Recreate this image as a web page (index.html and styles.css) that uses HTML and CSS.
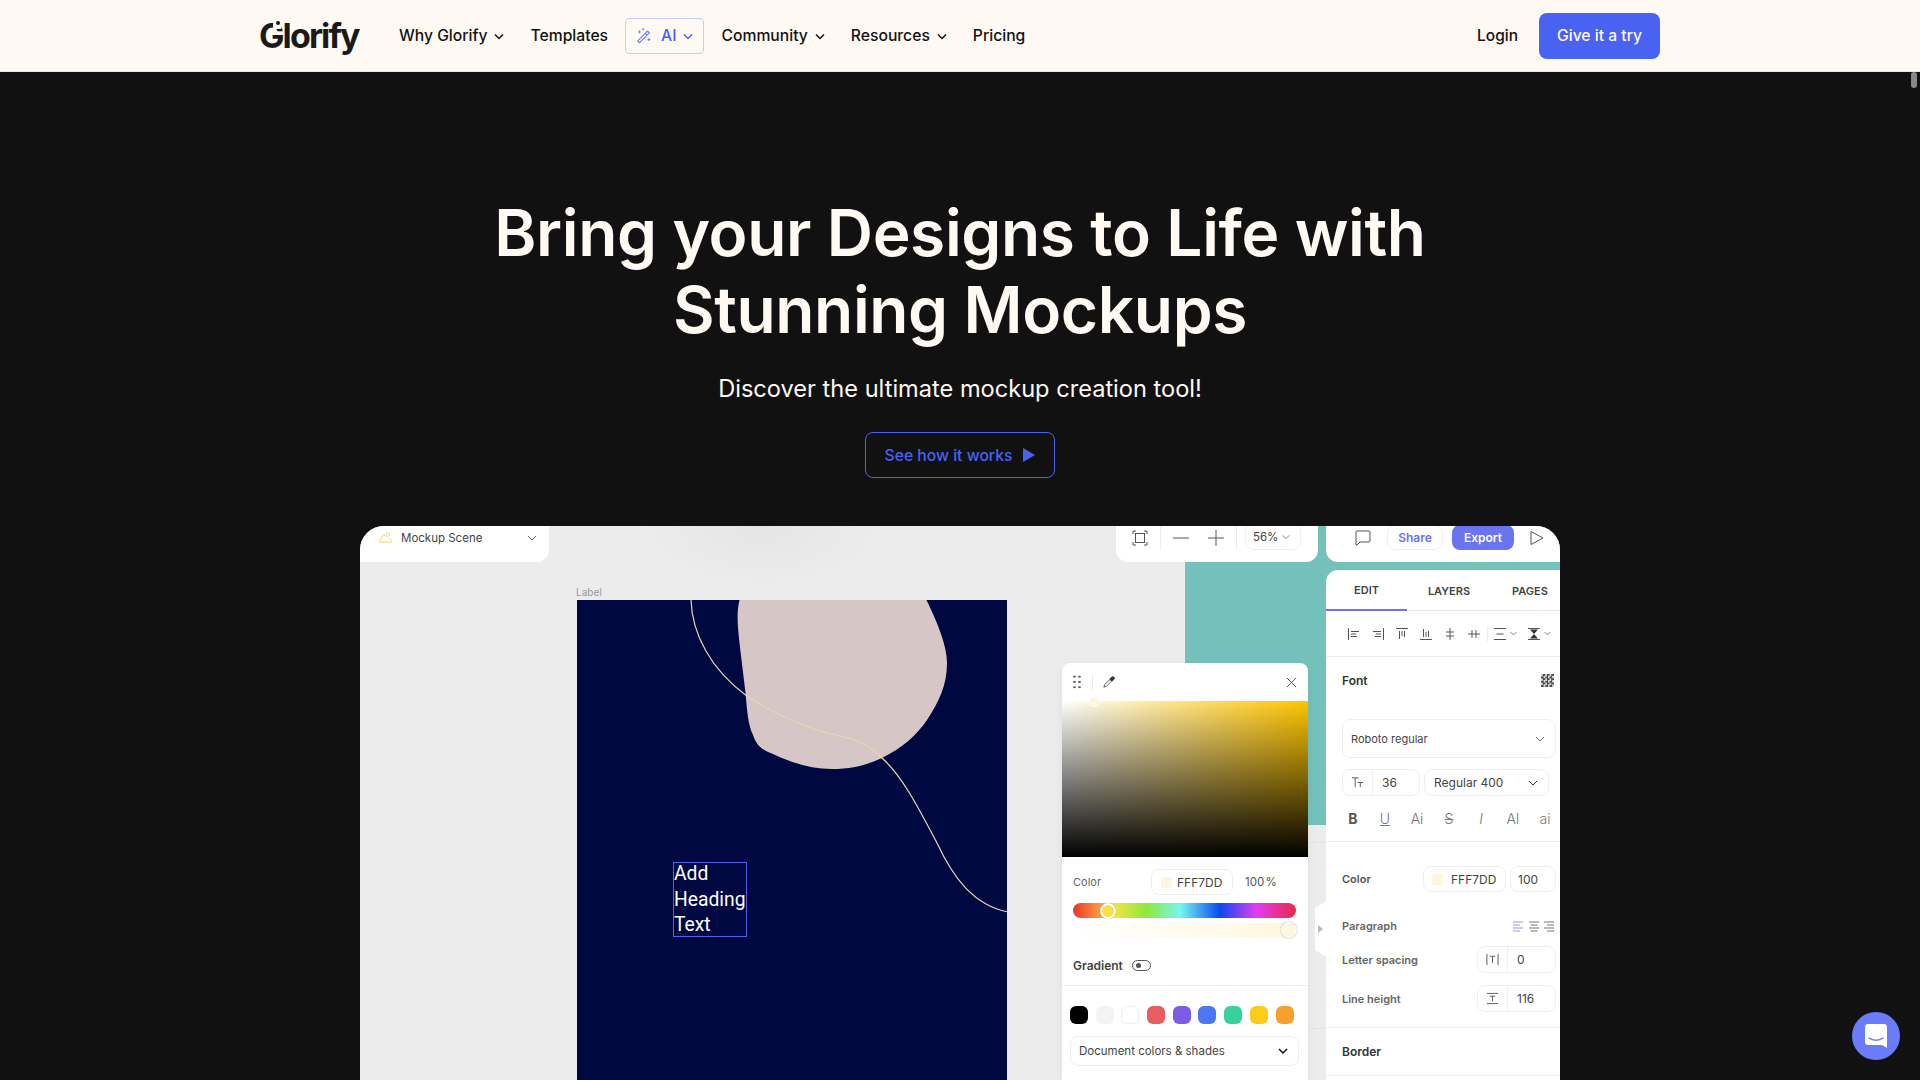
FILE: index.html
```html
<!DOCTYPE html>
<html lang="en">
<head>
    <meta charset="UTF-8">
    <meta name="viewport" content="width=device-width, initial-scale=1.0">
    <title>Glorify - Mockups</title>
    <link rel="stylesheet" href="styles.css">
</head>
<body>
    <!-- Top navigation -->
    <header class="topbar">
        <div class="topbar-inner">
            <a class="logo" href="#"><span class="logo-notch"></span><span class="logo-dot"></span>Glorify</a>
            <nav class="main-nav">
                <a class="nav-item" href="#">Why Glorify <svg class="chev" viewBox="0 0 12 12"><path d="M2 4.500 6 8.500l4-4"/></svg></a>
                <a class="nav-item" href="#">Templates</a>
                <a class="nav-item nav-ai" href="#">
                    <svg class="wand" viewBox="0 0 20 20"><path d="M3 15.500 14 4.500l2 2L5 17.500zM11.500 7l2 2M3.500 5.500h3M5 4v3M14 14h3M15.500 12.500v3M8 2.500h2M9 1.500v2"/></svg>
                    AI <svg class="chev" viewBox="0 0 12 12"><path d="M2 4.500 6 8.500l4-4"/></svg>
                </a>
                <a class="nav-item" href="#">Community <svg class="chev" viewBox="0 0 12 12"><path d="M2 4.500 6 8.500l4-4"/></svg></a>
                <a class="nav-item" href="#">Resources <svg class="chev" viewBox="0 0 12 12"><path d="M2 4.500 6 8.500l4-4"/></svg></a>
                <a class="nav-item" href="#">Pricing</a>
            </nav>
            <div class="nav-right">
                <a class="login" href="#">Login</a>
                <a class="try-btn" href="#">Give it a try</a>
            </div>
        </div>
    </header>

    <main class="hero">
        <h1>Bring your Designs to Life with<br>Stunning Mockups</h1>
        <p class="hero-sub">Discover the ultimate mockup creation tool!</p>
        <a class="how-btn" href="#">See how it works <svg viewBox="0 0 12 14"><path d="M0 0 12 7 0 14z"/></svg></a>

        <!-- Editor mockup -->
        <section class="mockup">
            <div class="teal"></div>
            <div class="canvas-glow"></div>
            <div class="canvas-rule rule-top"></div>
            <div class="canvas-rule rule-bottom"></div>

            <div class="artboard-label">Label</div>
            <div class="artboard">
                <svg class="art" viewBox="0 0 431 480">
                    <path fill="#d6c6c6" d="M162.500 0C160 10 160.500 20 161 28C163 50 166 70 168.500 93C170 110 171 125 176 135C180 147 186 150 196 154C215 163 235 169 255 169C275 169 290 165 305 158C325 148 340 135 350 120C362 102 370 85 370 63C370 45 360 22 349.500 0Z"/>
                    <path fill="none" stroke="#e8d9b0" stroke-width="1.200" d="M114 0C115 35 135 70 168.500 95C195 113 225 128 267 137C285 141 295 148 305 158C325 176 340 205 360 243C375 275 395 305 431 312"/>
                </svg>
                <div class="text-box"><span class="text-box-inner">Add Heading Text</span></div>
            </div>

            <div class="toolbars">
                <div class="tool scene-tool">
                    <svg class="cloud" viewBox="0 0 14 12"><path d="M1 11h11.500c1 0 1-2 0-3L11 6.500M1 11c-.5-1.500 0-2.500 1-3.500L5 3l2 2"/><circle cx="9.500" cy="2.800" r="1.800"/></svg>
                    <span class="scene-name">Mockup Scene</span>
                    <svg class="thin-chev" viewBox="0 0 12 12"><path d="M2 4l4 4 4-4"/></svg>
                </div>
                <div class="tool zoom-tool">
                    <svg class="ic16" viewBox="0 0 16 16"><path d="M1 4V1h3M12 1h3v3M15 12v3h-3M4 15H1v-3"/><rect x="3.500" y="3.500" width="9" height="9"/></svg>
                    <span class="tool-sep"></span>
                    <svg class="ic16" viewBox="0 0 16 16"><path d="M0 8h16"/></svg>
                    <svg class="ic16" viewBox="0 0 16 16"><path d="M0 8h16M8 0v16"/></svg>
                    <span class="tool-sep"></span>
                    <span class="zoom-val">56% <svg class="thin-chev" viewBox="0 0 12 12"><path d="M2 4l4 4 4-4"/></svg></span>
                </div>
                <div class="tool share-tool">
                    <svg class="ic16" viewBox="0 0 16 16"><path d="M2 1h12a1 1 0 0 1 1 1v9a1 1 0 0 1-1 1H5l-3 3H1V2a1 1 0 0 1 1-1z"/></svg>
                    <span class="share-btn">Share</span>
                    <span class="export-btn">Export</span>
                    <svg class="ic16" viewBox="0 0 16 16"><path d="M3 1.500 15 8 3 14.500z"/></svg>
                </div>
            </div>

            <!-- Right properties panel -->
            <aside class="props">
                <div class="tabs">
                    <span class="tab active">EDIT</span>
                    <span class="tab">LAYERS</span>
                    <span class="tab">PAGES</span>
                </div>
                <div class="align-row">
                    <svg class="ic12" viewBox="0 0 12 12"><path d="M.5 0v12M3 3.500h8M3 6h5M3 8.500h6"/></svg>
                    <svg class="ic12" viewBox="0 0 12 12"><path d="M11.500 0v12M1 3.500h8M4 6h5M3 8.500h6"/></svg>
                    <svg class="ic12" viewBox="0 0 12 12"><path d="M0 .5h12M3.500 3v8M6 3v5M8.500 3v6"/></svg>
                    <svg class="ic12" viewBox="0 0 12 12"><path d="M0 11.500h12M3.500 1v8M6 4v5M8.500 3v6"/></svg>
                    <svg class="ic12" viewBox="0 0 12 12"><path d="M6 0v12M2 4h8M2 8h8"/></svg>
                    <svg class="ic12" viewBox="0 0 12 12"><path d="M0 6h12M4 2v8M8 2v8"/></svg>
                    <span class="align-sep"></span>
                    <span class="align-drop"><svg class="ic12" viewBox="0 0 12 12"><path d="M0 .5h12M0 11.500h12M2.500 6h7"/></svg><svg class="thin-chev small" viewBox="0 0 12 12"><path d="M2 4l4 4 4-4"/></svg></span>
                    <span class="align-drop drop-last"><svg class="ic12 hour" viewBox="0 0 12 12"><path d="M0 .5h12M0 11.500h12"/><path class="solid" d="M2 1.500h8L6 6zM2 10.500h8L6 6z"/></svg><svg class="thin-chev small" viewBox="0 0 12 12"><path d="M2 4l4 4 4-4"/></svg></span>
                </div>

                <div class="font-section">
                    <div class="font-head">
                        <span class="font-title">Font</span>
                        <span class="checker"></span>
                    </div>
                    <div class="field font-select">Roboto regular <svg class="thin-chev" viewBox="0 0 12 12"><path d="M2 4l4 4 4-4"/></svg></div>
                    <div class="size-row">
                        <div class="field split size-field">
                            <span class="split-ic"><svg class="ic14" viewBox="0 0 14 14"><path d="M1 2h7M4.500 2v10M7 7h6M10 7v5"/></svg></span>
                            <span class="split-val">36</span>
                        </div>
                        <div class="field weight-field">Regular 400 <svg class="thin-chev dark" viewBox="0 0 12 12"><path d="M2 4l4 4 4-4"/></svg></div>
                    </div>
                    <div class="style-row">
                        <span class="st st-b">B</span>
                        <span class="st st-u">U</span>
                        <span class="st">Ai</span>
                        <span class="st st-s">S</span>
                        <span class="st st-i">I</span>
                        <span class="st">AI</span>
                        <span class="st">ai</span>
                    </div>
                </div>

                <div class="para-section">
                    <div class="prop-row color-row">
                        <span class="prop-label">Color</span>
                        <div class="field color-field"><span class="swatch"></span>FFF7DD</div>
                        <div class="field alpha-field">100</div>
                    </div>
                    <div class="prop-row para-row">
                        <span class="prop-label">Paragraph</span>
                        <span class="para-icons">
                            <svg class="pa on" viewBox="0 0 12 12"><path d="M1 2h10M1 5h7M1 8h10M1 11h7"/></svg>
                            <svg class="pa" viewBox="0 0 12 12"><path d="M1 2h10M2.500 5h7M1 8h10M2.500 11h7"/></svg>
                            <svg class="pa" viewBox="0 0 12 12"><path d="M1 2h10M4 5h7M1 8h10M4 11h7"/></svg>
                        </span>
                    </div>
                    <div class="prop-row spacing-row">
                        <span class="prop-label">Letter spacing</span>
                        <div class="field split">
                            <span class="split-ic"><svg class="ic14" viewBox="0 0 14 14"><path d="M1 1v12M13 1v12M4 3.500h6M7 3.500V11"/></svg></span>
                            <span class="split-val">0</span>
                        </div>
                    </div>
                    <div class="prop-row height-row">
                        <span class="prop-label">Line height</span>
                        <div class="field split">
                            <span class="split-ic"><svg class="ic14" viewBox="0 0 14 14"><path d="M1 1.500h12M1 12.500h12M4 4.500h6M7 4.500V10"/></svg></span>
                            <span class="split-val">116</span>
                        </div>
                    </div>
                </div>

                <div class="border-section">Border</div>
            </aside>

            <div class="collapse-tab"></div>

            <!-- Colour picker popup -->
            <div class="picker">
                <div class="picker-head">
                    <span class="grip"></span>
                    <span class="picker-sep"></span>
                    <svg class="dropper" viewBox="0 0 14 14"><path d="M1 13l1-3 6-6 2 2-6 6z"/><path class="solid" d="M7.500 3.500 10 1c1-1 2-1 3 0s1 2 0 3l-2.500 2.500z"/></svg>
                    <svg class="close" viewBox="0 0 12 12"><path d="M1 1l10 10M11 1 1 11"/></svg>
                </div>
                <div class="sat-box"><span class="sat-knob"></span></div>
                <div class="picker-color">
                    <span class="pc-label">Color</span>
                    <div class="field pc-field"><span class="swatch"></span>FFF7DD</div>
                    <span class="pc-alpha">100 %</span>
                </div>
                <div class="hue-bar"><span class="hue-knob"></span></div>
                <div class="alpha-bar"><span class="alpha-knob"></span></div>
                <div class="gradient-row">
                    <span class="gradient-label">Gradient</span>
                    <span class="toggle"><span class="toggle-dot"></span></span>
                </div>
                <div class="swatches">
                    <span class="dot s-black"></span>
                    <span class="dot s-grey"></span>
                    <span class="dot s-white"></span>
                    <span class="dot s-red"></span>
                    <span class="dot s-purple"></span>
                    <span class="dot s-blue"></span>
                    <span class="dot s-green"></span>
                    <span class="dot s-yellow"></span>
                    <span class="dot s-orange"></span>
                </div>
                <div class="field doc-select">Document colors &amp; shades <svg class="bold-chev" viewBox="0 0 12 12"><path d="M2 4l4 4 4-4"/></svg></div>
            </div>
        </section>
    </main>

    <!-- Overlays -->
    <div class="chat-bubble">
        <svg viewBox="0 0 22 24"><path fill="#fff" d="M3 0h16a3 3 0 0 1 3 3v21l-5-3H3a3 3 0 0 1-3-3V3a3 3 0 0 1 3-3z"/><path fill="none" stroke="#6a7cfb" stroke-width="1.500" stroke-linecap="round" d="M4 14c4 3 10 3 14 0"/></svg>
    </div>
    <div class="scroll-thumb"></div>
</body>
</html>
```

FILE: styles.css
```css
* {
    box-sizing: border-box;
}

html, body {
    height: 100vh;
    overflow: hidden;
}

body {
    margin: 0;
    background-color: #111111;
    font-family: Inter, "Noto Sans", sans-serif;
    color: #111;
}

a {
    text-decoration: none;
    color: inherit;
}

svg {
    display: block;
    flex: none;
}

/* Top navigation */
.topbar {
    height: 72px;
    background-color: #fff9f3;
    border-bottom: 1px solid #e9e5e0;
}

.topbar-inner {
    width: 1400px;
    height: 71px;
    margin: 0 auto;
    display: flex;
    align-items: center;
}

.logo {
    position: relative;
    width: 102px;
    margin-left: -1px;
    margin-right: 30px;
    font-size: 34px;
    font-weight: 700;
    letter-spacing: -1.900px;
    color: #1a1a1a;
    line-height: 40px;
}

/* the gap and dot at the top of the G */
.logo-notch {
    position: absolute;
    left: 14px;
    top: 5px;
    width: 8px;
    height: 8px;
    background-color: #fff9f3;
}

.logo-dot {
    position: absolute;
    left: 17px;
    top: 5px;
    width: 4px;
    height: 4px;
    border-radius: 50%;
    background-color: #1a1a1a;
}

.main-nav {
    display: flex;
    align-items: center;
    gap: 9px;
}

.nav-item {
    display: flex;
    align-items: center;
    gap: 6px;
    height: 36px;
    padding: 0 8px;
    font-size: 15.700px;
    font-weight: 500;
    color: #111;
}

.chev {
    width: 12px;
    height: 12px;
    fill: none;
    stroke: currentColor;
    stroke-width: 1.500;
}

.nav-ai {
    gap: 6px;
    padding: 0 9px;
    border: 1px solid #c3ccfb;
    border-radius: 4px;
    color: #4a62f2;
}

.wand {
    width: 18px;
    height: 18px;
    margin-right: 2px;
    fill: none;
    stroke: #6a7cfb;
    stroke-width: 1.200;
}

.nav-right {
    margin-left: auto;
    display: flex;
    align-items: center;
    gap: 21px;
}

.login {
    font-size: 15.500px;
    font-weight: 500;
}

.try-btn {
    width: 121px;
    height: 46px;
    display: flex;
    align-items: center;
    justify-content: center;
    background-color: #4a62f2;
    border-radius: 8px;
    color: #fff9f3;
    font-size: 15.700px;
    font-weight: 500;
}

/* Hero */
.hero {
    display: flex;
    flex-direction: column;
    align-items: center;
    padding-top: 122px;
}

.hero h1 {
    margin: 0;
    font-size: 64px;
    line-height: 77px;
    font-weight: 600;
    letter-spacing: -0.360px;
    text-align: center;
    color: #fff9f3;
}

.hero-sub {
    margin: 25px 0 0;
    font-size: 23.600px;
    line-height: 32px;
    color: #fff9f3;
}

.how-btn {
    margin-top: 27px;
    width: 190px;
    height: 46px;
    display: flex;
    align-items: center;
    justify-content: center;
    gap: 11px;
    border: 1px solid #4a62f2;
    border-radius: 8px;
    color: #4a62f2;
    font-size: 15.700px;
    font-weight: 500;
}

.how-btn svg {
    width: 12px;
    height: 14px;
    fill: #4a62f2;
}

/* Editor mockup, a free canvas: things float over it */
.mockup {
    position: relative;
    flex: none;
    width: 1200px;
    height: 554px;
    margin-top: 48px;
    background-color: #ececec;
    border-radius: 24px 24px 0 0;
    overflow: hidden;
}

.teal {
    position: absolute;
    left: 825px;
    top: 0;
    width: 375px;
    height: 299px;
    background-color: #74c1bc;
}

.canvas-glow {
    position: absolute;
    left: 282px;
    top: -60px;
    width: 240px;
    height: 120px;
    background: radial-gradient(closest-side, #e5e5e5, #ececec);
}

.canvas-rule {
    position: absolute;
    left: 948px;
    width: 18px;
    height: 1px;
    background-color: #e4e4e4;
}

.rule-top {
    top: 316px;
}

.rule-bottom {
    top: 502px;
}

.artboard-label {
    position: absolute;
    left: 216px;
    top: 60px;
    font-size: 10px;
    color: #999;
}

.artboard {
    position: absolute;
    left: 217px;
    top: 74px;
    width: 430px;
    height: 480px;
    background-color: #000842;
}

.art {
    width: 431px;
    height: 480px;
}

.text-box {
    position: absolute;
    left: 96px;
    top: 262px;
    width: 74px;
    height: 75px;
    border: 1px solid #4f64e8;
    font-family: Roboto, sans-serif;
    font-size: 19.300px;
    line-height: 25.500px;
    color: #fff;
}

.text-box-inner {
    display: block;
    margin-top: -2px;
}

/* Top toolbars */
.toolbars {
    position: absolute;
    left: 0;
    top: 0;
    width: 100%;
    display: flex;
    font-size: 12px;
    color: #444;
}

.tool {
    height: 36px;
    display: flex;
    align-items: center;
    background-color: #fff;
    border-radius: 0 0 12px 12px;
}

.scene-tool {
    width: 189px;
    padding: 0 11px 13px 19px;
    border-bottom-left-radius: 0;
}

.cloud {
    width: 13px;
    height: 11px;
    fill: none;
    stroke: #f2cf5b;
    stroke-width: 1;
}

.scene-name {
    margin-left: 9px;
    font-size: 11.500px;
}

.thin-chev {
    width: 12px;
    height: 12px;
    margin-left: auto;
    fill: none;
    stroke: #666;
    stroke-width: 1;
}

.thin-chev.small {
    width: 9px;
    height: 9px;
    margin-left: 3px;
}

.thin-chev.dark {
    stroke: #333;
}

.ic16 {
    width: 16px;
    height: 16px;
    fill: none;
    stroke: #555;
    stroke-width: 1;
}

.zoom-tool {
    margin-left: 567px;
    width: 202px;
    padding: 0 12px 13px 16px;
}

.zoom-tool .ic16:nth-of-type(2) {
    margin-left: 12px;
}

.zoom-tool .ic16:nth-of-type(3) {
    margin-left: 19px;
}

.tool-sep {
    width: 1px;
    height: 24px;
    margin-left: 12px;
    background-color: #eee;
}

.zoom-val {
    width: 56px;
    height: 26px;
    margin-left: 8px;
    margin-top: -1px;
    padding: 0 7px;
    display: flex;
    align-items: center;
    gap: 3px;
    border: 1px solid #efefef;
    border-radius: 8px;
    font-size: 11.500px;
    white-space: nowrap;
}

.zoom-val .thin-chev {
    width: 10px;
    height: 10px;
    margin-left: 0;
}

.share-tool {
    margin-left: 8px;
    flex: 1;
    padding: 0 0 13px 29px;
    border-bottom-right-radius: 0;
}

.share-btn {
    margin-left: 16px;
    width: 56px;
    height: 25px;
    display: flex;
    align-items: center;
    justify-content: center;
    border: 1px solid #efefef;
    border-radius: 8px;
    color: #6a74ef;
    font-weight: 600;
}

.export-btn {
    margin-left: 9px;
    width: 62px;
    height: 25px;
    display: flex;
    align-items: center;
    justify-content: center;
    background-color: #6a74ef;
    border-radius: 8px;
    color: #fff;
    font-weight: 600;
}

.export-btn + .ic16 {
    margin-left: 14px;
}

/* Right properties panel */
.props {
    position: absolute;
    left: 966px;
    top: 44px;
    width: 234px;
    height: 510px;
    background-color: #fff;
    border-radius: 12px 0 0 0;
    font-size: 11.500px;
    color: #444;
    overflow: hidden;
}

.tabs {
    height: 41px;
    display: grid;
    grid-template-columns: 81px 84px 78px;
    border-bottom: 1px solid #e9e9e9;
}

.tab {
    display: flex;
    align-items: center;
    justify-content: center;
    font-size: 11px;
    font-weight: 600;
    color: #444;
}

.tab.active {
    height: 41px;
    border-bottom: 2px solid #6a74ef;
}

.align-row {
    height: 46px;
    padding: 0 0 0 22px;
    display: flex;
    align-items: center;
    gap: 12px;
    border-bottom: 1px solid #eee;
}

.ic12 {
    width: 12px;
    height: 12px;
    fill: none;
    stroke: #555;
    stroke-width: 1;
}

.ic12 .solid,
.dropper .solid {
    fill: #333;
    stroke: none;
}

.align-sep {
    width: 1px;
    height: 16px;
    margin: 0 -6px 0 -5px;
    background-color: #eee;
}

.align-drop {
    display: flex;
    align-items: center;
}

.drop-last {
    margin-left: -2px;
}

.font-section {
    height: 185px;
    padding: 0 4px 0 16px;
    border-bottom: 1px solid #eee;
}

.font-head {
    height: 47px;
    display: flex;
    align-items: center;
    justify-content: space-between;
    padding-right: 2px;
}

.font-title {
    font-size: 12px;
    font-weight: 600;
    color: #333;
}

.checker {
    width: 13px;
    height: 13px;
    background-color: #fff;
    background-image: conic-gradient(#444 25%, #ddd 0 50%, #444 0 75%, #ddd 0);
    background-size: 4.300px 4.300px;
}

.field {
    display: flex;
    align-items: center;
    background-color: #fff;
    border: 1px solid #efefef;
    border-radius: 8px;
    font-size: 12px;
    color: #444;
}

.font-select {
    height: 39px;
    margin-top: 15px;
    padding: 0 9px 0 8px;
    font-size: 11px;
}

.size-row {
    display: flex;
    margin-top: 11px;
    gap: 4px;
}

.split {
    width: 79px;
    height: 27px;
}

.size-field {
    width: 78px;
}

.split-ic {
    width: 30px;
    height: 100%;
    display: flex;
    align-items: center;
    justify-content: center;
    border-right: 1px solid #efefef;
}

.ic14 {
    width: 13px;
    height: 13px;
    fill: none;
    stroke: #555;
    stroke-width: 1;
}

.split-val {
    padding-left: 9px;
}

.weight-field {
    width: 125px;
    height: 27px;
    padding: 0 9px 0 9px;
}

.style-row {
    position: relative;
    display: grid;
    grid-template-columns: repeat(7, 32px);
    margin: 9px 0 0 -5px;
    height: 27px;
    align-items: center;
    font-size: 14px;
    color: #777;
}

.st {
    text-align: center;
    font-weight: 300;
}

.st-b {
    font-weight: 700;
    color: #555;
}

.st-u {
    text-decoration: underline;
}

.st-s {
    text-decoration: line-through;
}

.st-i {
    font-style: italic;
}

.para-section {
    height: 186px;
    padding: 24px 4px 0 16px;
    border-bottom: 1px solid #eee;
}

.prop-row {
    display: flex;
    align-items: center;
}

.prop-label {
    font-weight: 600;
    font-size: 11px;
    color: #666;
    margin-right: auto;
}

.color-row {
    height: 26px;
    gap: 4px;
}

.color-row .prop-label {
    color: #555;
}

.swatch {
    width: 11px;
    height: 11px;
    margin-right: 8px;
    background-color: #fff7dd;
}

.color-field {
    width: 83px;
    height: 26px;
    padding-left: 8px;
}

.alpha-field {
    width: 46px;
    height: 26px;
    padding-left: 7px;
}

.para-row {
    margin-top: 26px;
    height: 16px;
}

.para-icons {
    display: flex;
    gap: 3.500px;
    margin-right: 1px;
}

.pa {
    width: 12px;
    height: 12px;
    fill: none;
    stroke: #777;
    stroke-width: 1;
}

.pa.on {
    stroke: #8e98e8;
}

.spacing-row {
    margin-top: 12px;
}

.height-row {
    margin-top: 12px;
}

.border-section {
    height: 48px;
    padding-left: 16px;
    display: flex;
    align-items: center;
    border-bottom: 1px solid #eee;
    font-size: 12px;
    font-weight: 600;
    color: #333;
}

/* Little tab on the panel edge */
.collapse-tab {
    position: absolute;
    left: 955px;
    top: 375px;
    width: 12px;
    height: 56px;
    background-color: #fff;
    clip-path: polygon(100% 0, 100% 100%, 0 88%, 0 12%);
}

.collapse-tab::after {
    content: "";
    position: absolute;
    left: 3px;
    top: 24px;
    border-left: 5px solid #bbb;
    border-top: 4px solid transparent;
    border-bottom: 4px solid transparent;
}

/* Colour picker */
.picker {
    position: absolute;
    left: 702px;
    top: 137px;
    width: 246px;
    height: 417px;
    background-color: #fff;
    border-radius: 8px 8px 0 0;
    box-shadow: 0 2px 10px rgba(0, 0, 0, 0.06);
}

.picker-head {
    height: 38px;
    padding: 0 11px 0 10px;
    display: flex;
    align-items: center;
}

.grip {
    width: 10px;
    height: 16px;
    background-image: radial-gradient(circle, #555 1px, transparent 1.300px);
    background-size: 5px 5.300px;
}

.picker-sep {
    width: 1px;
    height: 16px;
    margin-left: 10px;
    background-color: #eee;
}

.dropper {
    width: 12px;
    height: 12px;
    margin-left: 10px;
    fill: none;
    stroke: #444;
    stroke-width: 1;
}

.close {
    width: 11px;
    height: 11px;
    margin-left: auto;
    fill: none;
    stroke: #444;
    stroke-width: 1;
}

.sat-box {
    position: relative;
    height: 156px;
    background:
        linear-gradient(to bottom, rgba(0, 0, 0, 0), #000),
        linear-gradient(to right, #fff, #ffc400);
}

.sat-knob {
    position: absolute;
    left: 27px;
    top: -5px;
    width: 11px;
    height: 11px;
    border-radius: 50%;
    background-color: #fff7dd;
    border: 1px solid #fff;
}

.picker-color {
    height: 26px;
    margin-top: 12px;
    padding: 0 11px;
    display: flex;
    align-items: center;
    font-size: 11px;
    color: #666;
}

.pc-label {
    width: 78px;
}

.pc-field {
    width: 82px;
    height: 26px;
    padding-left: 9px;
    font-size: 12px;
}

.pc-field .swatch {
    margin-right: 5px;
}

.pc-alpha {
    margin-left: 12px;
    font-size: 11.500px;
    word-spacing: -2px;
    color: #555;
}

.hue-bar {
    position: relative;
    height: 15px;
    margin: 8px 12px 0 11px;
    border-radius: 8px;
    background: linear-gradient(to right, #e8352c, #fb9b3c 12%, #f5e546 18%, #8ee83c 33%, #76f7f0 48%, #0b48f0 66%, #e13df0 82%, #e9294a);
}

.hue-knob {
    position: absolute;
    left: 27px;
    top: -0.500px;
    width: 16px;
    height: 16px;
    border-radius: 50%;
    background-color: #f9e04a;
    border: 2px solid #fff;
    box-shadow: 0 0 1px rgba(0, 0, 0, 0.4);
}

.alpha-bar {
    position: relative;
    height: 15px;
    margin: 5px 12px 0 11px;
    border-radius: 8px;
    background: linear-gradient(to right, #fff, #fff7dd);
}

.alpha-knob {
    position: absolute;
    left: 208px;
    top: -1px;
    width: 16px;
    height: 16px;
    border-radius: 50%;
    background-color: #fff7dd;
    border: 1px solid #fff;
    box-shadow: 0 0 2px rgba(0, 0, 0, 0.3);
}

.gradient-row {
    height: 40px;
    margin-top: 8px;
    padding-left: 11px;
    display: flex;
    align-items: center;
    gap: 9px;
    border-bottom: 1px solid #eee;
}

.gradient-label {
    font-size: 12px;
    font-weight: 600;
    color: #444;
}

.toggle {
    width: 19px;
    height: 11px;
    padding: 2px 0 0 3px;
    border: 1px solid #555;
    border-radius: 6px;
}

.toggle-dot {
    display: block;
    width: 5px;
    height: 5px;
    border-radius: 50%;
    background-color: #555;
}

.swatches {
    display: flex;
    gap: 7.700px;
    margin-top: 20px;
    padding-left: 8px;
}

.dot {
    width: 18px;
    height: 18px;
    border-radius: 6px;
}

.s-black { background-color: #000; }
.s-grey { background-color: #f3f3f3; }
.s-white { background-color: #fff; border: 1px solid #eee; }
.s-red { background-color: #e85d62; }
.s-purple { background-color: #7a5ce6; }
.s-blue { background-color: #4a78f5; }
.s-green { background-color: #38d19c; }
.s-yellow { background-color: #fdcb1c; }
.s-orange { background-color: #f99f2e; }

.doc-select {
    height: 30px;
    margin: 12px 9px 0 8px;
    padding: 0 9px 0 8px;
    font-size: 11.500px;
    justify-content: space-between;
}

.bold-chev {
    width: 12px;
    height: 12px;
    fill: none;
    stroke: #111;
    stroke-width: 1.500;
}

/* Fixed overlays */
.chat-bubble {
    position: fixed;
    left: 1852px;
    top: 1012px;
    width: 48px;
    height: 48px;
    display: flex;
    align-items: center;
    justify-content: center;
    border-radius: 50%;
    background-color: #6a7cfb;
}

.chat-bubble svg {
    width: 22px;
    height: 24px;
}

.scroll-thumb {
    position: fixed;
    left: 1911px;
    top: 72px;
    width: 6px;
    height: 16px;
    border-radius: 3px;
    background-color: #888;
}
```
